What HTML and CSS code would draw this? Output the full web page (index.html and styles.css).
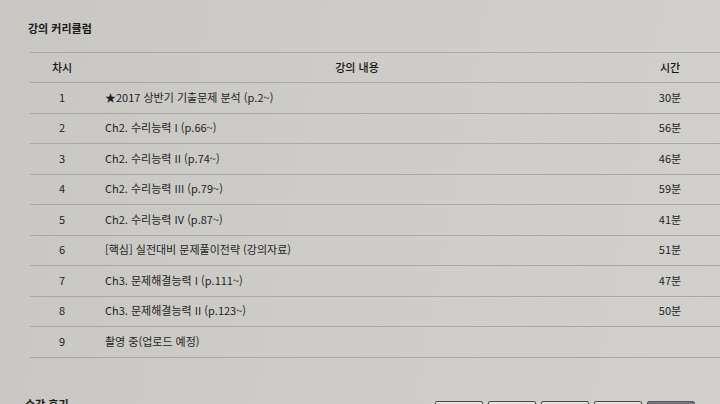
FILE: index.html
```html
<!DOCTYPE html>
<html lang="ko">
<head>
<meta charset="utf-8">
<link rel="stylesheet" href="styles.css">
</head>
<body>
<div class="page">
  <h2 class="title">강의 커리큘럼</h2>
  <div class="table">
    <div class="row head">
      <div class="c-no">차시</div>
      <div class="c-title">강의 내용</div>
      <div class="c-time">시간</div>
    </div>
    <div class="row"><div class="c-no">1</div><div class="c-title left">★2017 상반기 기출문제 분석 (p.2~)</div><div class="c-time">30분</div></div>
    <div class="row"><div class="c-no">2</div><div class="c-title left">Ch2. 수리능력 I (p.66~)</div><div class="c-time">56분</div></div>
    <div class="row"><div class="c-no">3</div><div class="c-title left">Ch2. 수리능력 II (p.74~)</div><div class="c-time">46분</div></div>
    <div class="row"><div class="c-no">4</div><div class="c-title left">Ch2. 수리능력 III (p.79~)</div><div class="c-time">59분</div></div>
    <div class="row"><div class="c-no">5</div><div class="c-title left">Ch2. 수리능력 IV (p.87~)</div><div class="c-time">41분</div></div>
    <div class="row"><div class="c-no">6</div><div class="c-title left">[핵심] 실전대비 문제풀이전략 (강의자료)</div><div class="c-time">51분</div></div>
    <div class="row"><div class="c-no">7</div><div class="c-title left">Ch3. 문제해결능력 I (p.111~)</div><div class="c-time">47분</div></div>
    <div class="row"><div class="c-no">8</div><div class="c-title left">Ch3. 문제해결능력 II (p.123~)</div><div class="c-time">50분</div></div>
    <div class="row"><div class="c-no">9</div><div class="c-title left">촬영 중(업로드 예정)</div><div class="c-time"></div></div>
  </div>
  <div class="bottom">
    <h2 class="title review">수강 후기</h2>
    <div class="buttons">
      <span class="btn"></span><span class="btn"></span><span class="btn"></span><span class="btn"></span><span class="btn dark"></span>
    </div>
  </div>
</div>
</body>
</html>
```
FILE: styles.css
```css
html, body {
  margin: 0;
  padding: 0;
}
body {
  width: 720px;
  height: 404px;
  overflow: hidden;
  background: linear-gradient(100deg, #c8c7c3 0%, #cdccc8 45%, #d1d0cd 100%);
  font-family: "Noto Sans CJK KR", "Noto Sans", sans-serif;
  color: #1e1e1e;
  font-size: 11px;
}
.page {
  padding: 20px 0 0 0;
}
.title {
  margin: 0 0 0 28px;
  font-size: 11px;
  line-height: 16px;
  font-weight: 700;
  color: #1a1a1a;
}
.table {
  margin: 16px 0 0 30px;
  border-top: 1px solid #a9a8a4;
}
.row {
  display: grid;
  grid-template-columns: 64px 1fr 100px;
  align-items: center;
  height: 30.5px;
  box-sizing: border-box;
  border-bottom: 1px solid #a9a8a4;
  color: #1f1f1f;
  line-height: 14px;
  padding-bottom: 2px;
}
.row.head {
  height: 30px;
  font-weight: 500;
  color: #151515;
  padding-bottom: 1px;
}
.c-no {
  text-align: center;
}
.c-title {
  text-align: center;
}
.c-title.left {
  text-align: left;
  padding-left: 11px;
}
.c-time {
  text-align: center;
}
.bottom {
  display: flex;
  justify-content: space-between;
  align-items: flex-start;
  margin-top: 38px;
}
.review {
  margin-left: 25px;
}
.buttons {
  display: flex;
  gap: 5px;
  margin-top: 5px;
  margin-right: 25px;
}
.btn {
  width: 46px;
  height: 22px;
  border: 1px solid #4a4a48;
  border-radius: 2px;
  background: #e4e3e0;
}
.btn.dark {
  background: #76757a;
  border-color: #5a595c;
}
```
